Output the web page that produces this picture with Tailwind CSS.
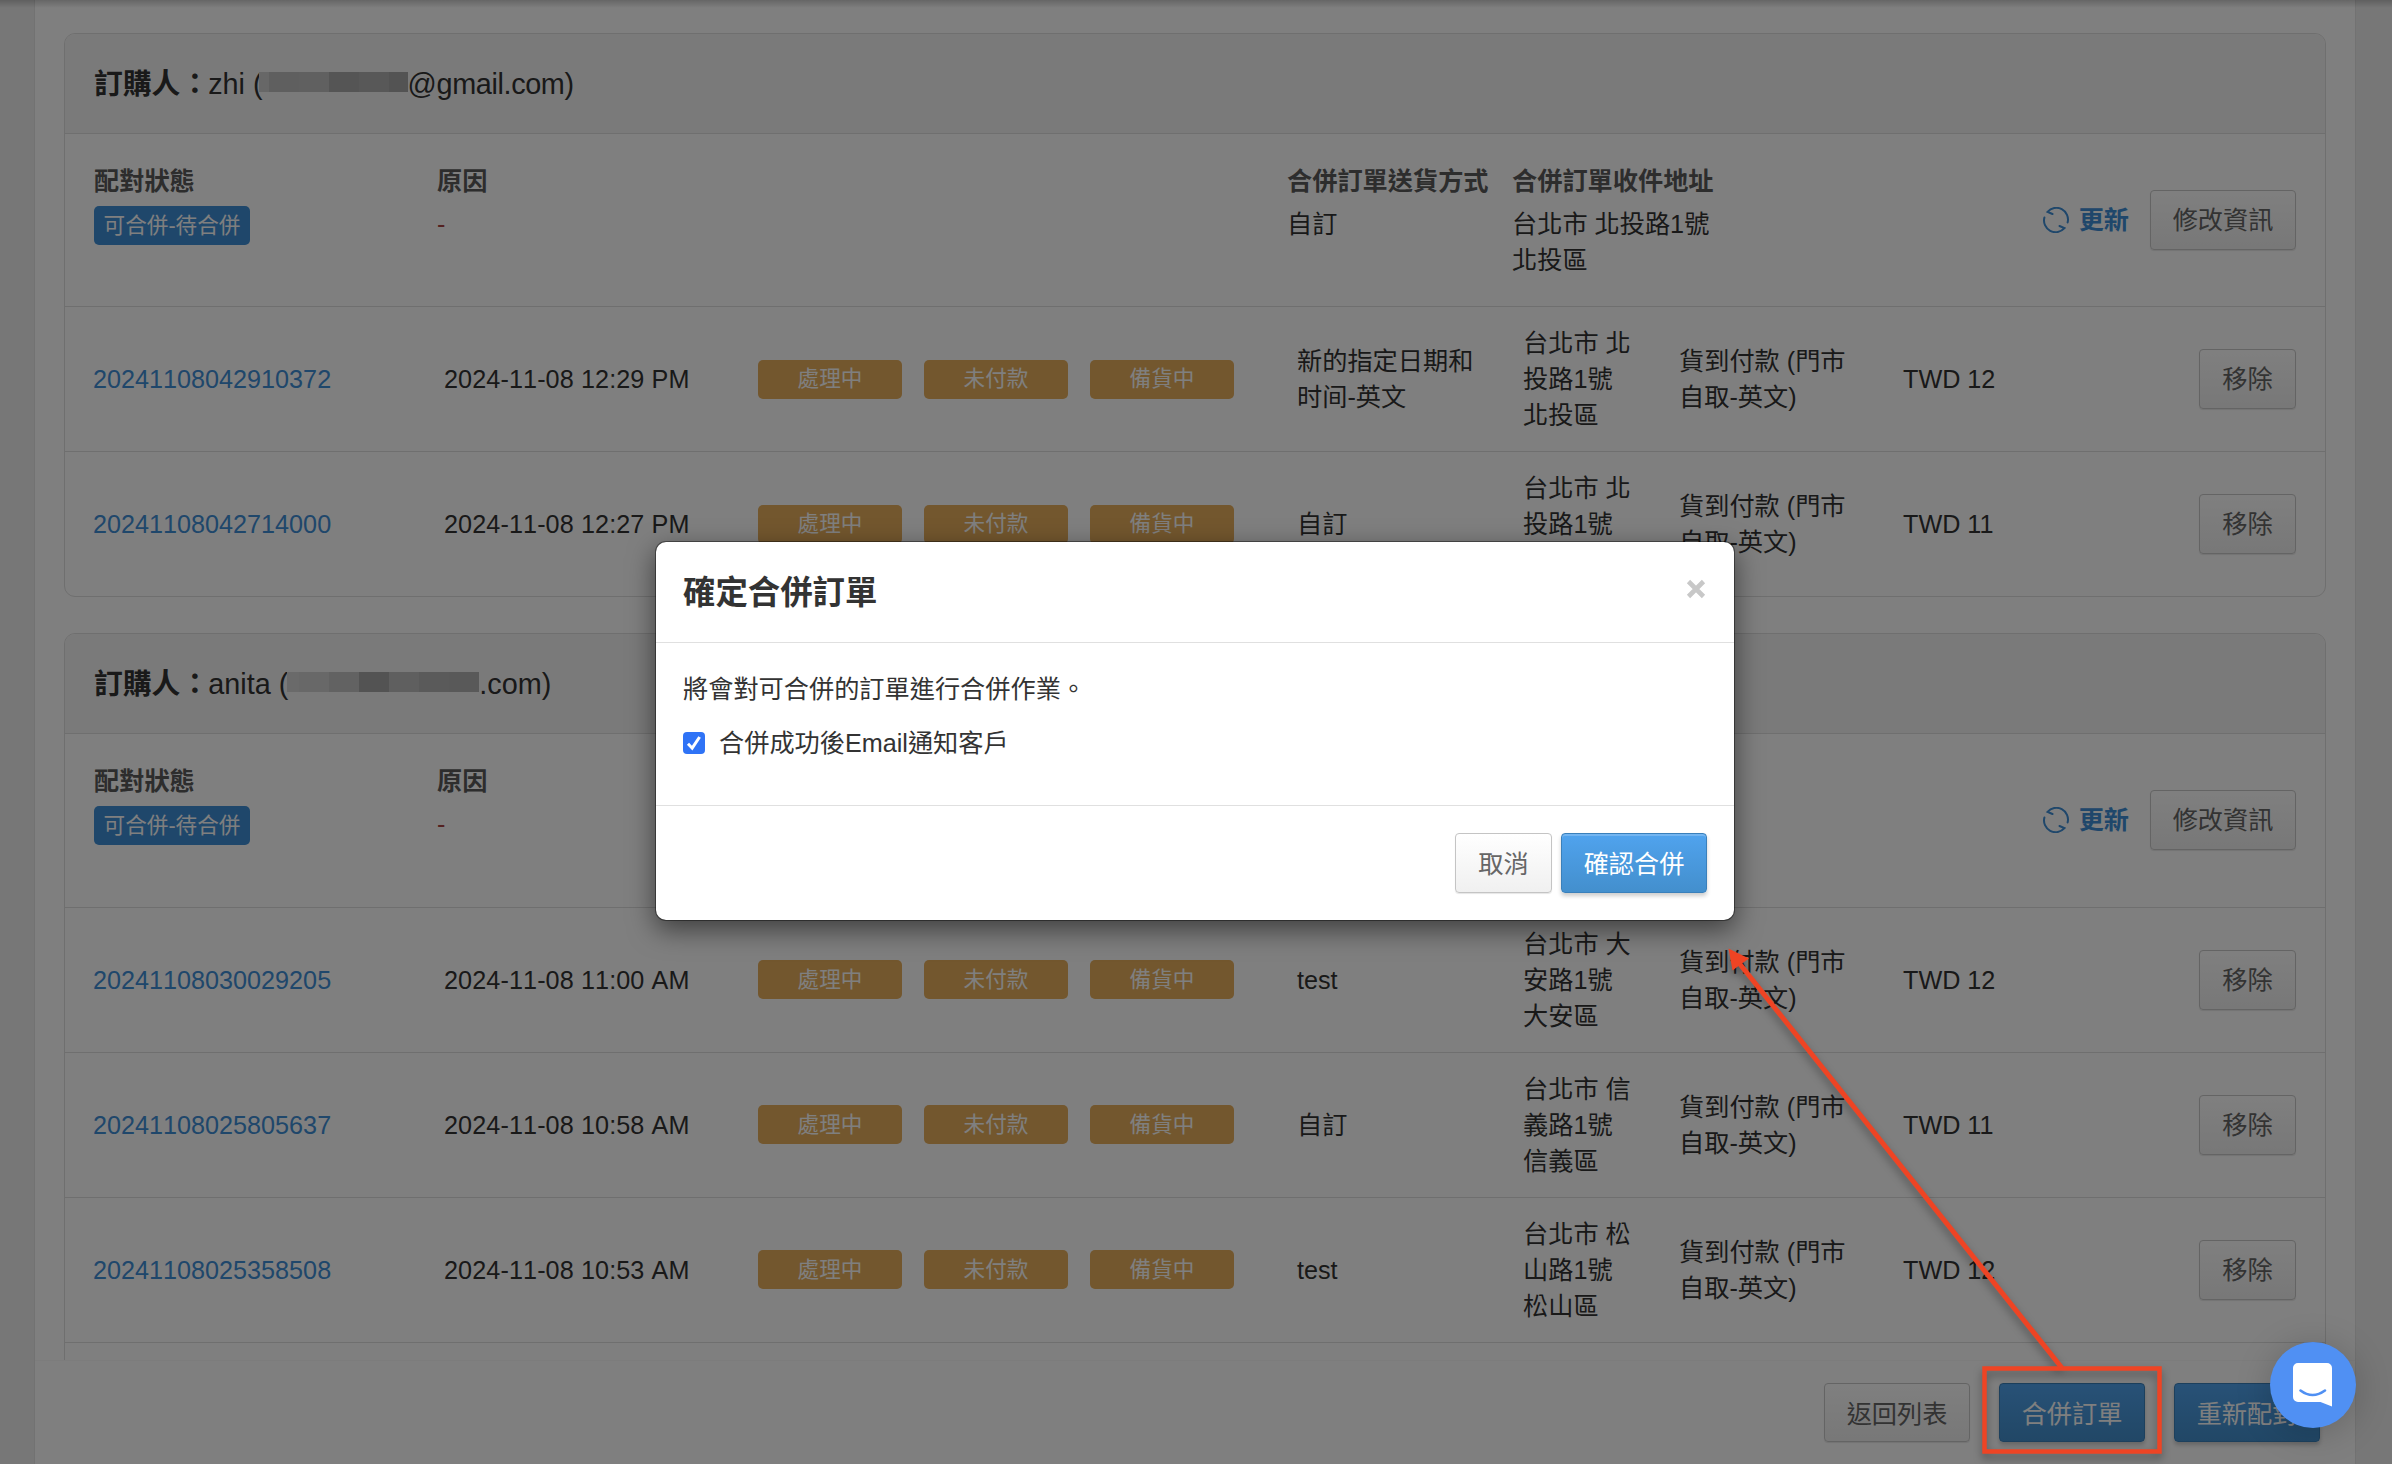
<!DOCTYPE html>
<html lang="zh-Hant">

<head>
    <meta charset="UTF-8">
    <meta name="viewport" content="width=device-width, initial-scale=1.0">
    <title>合併訂單</title>
    <script src="https://cdn.jsdelivr.net/npm/@tailwindcss/browser@4"></script>
</head>

<body class="relative h-[1464px] w-[2392px] overflow-hidden bg-[#efefef] font-['Liberation_Sans','Noto_Sans_CJK_TC',sans-serif] text-[25.2px] leading-9 text-[#333]">
    <main class="ml-[34px] flex h-full w-[2322px] flex-col border-x border-[#e4e4e4] bg-white">
        <div id="groups" class="flex h-[1360px] shrink-0 flex-col gap-9 overflow-hidden px-[29px] pt-[33px]"></div>
        <footer class="flex flex-1 items-start justify-end gap-[29px] border-t border-[#f8f8f8] bg-white pt-[22px] pr-[35px]">
            <button class="h-[59px] w-[146px] rounded-[4px] border border-[#c8c8c8] bg-gradient-to-b from-white to-[#f0f0f0] pt-0.5 text-[#666] shadow-[0_1px_1px_rgba(0,0,0,0.1)]">返回列表</button>
            <button class="h-[59px] w-[146px] rounded-[4px] border border-[#3a80bb] bg-gradient-to-b from-[#50a3ee] to-[#438fcd] pt-0.5 text-white shadow-[0_3px_4px_rgba(0,0,0,0.2)]">合併訂單</button>
            <button class="h-[59px] w-[146px] rounded-[4px] border border-[#3a80bb] bg-gradient-to-b from-[#50a3ee] to-[#438fcd] pt-0.5 text-white shadow-[0_3px_4px_rgba(0,0,0,0.2)]">重新配對</button>
        </footer>
    </main>
    <div class="absolute inset-x-0 top-0 h-2 bg-gradient-to-b from-black/20 to-transparent"></div>

    <!-- Backdrop -->
    <div class="absolute inset-0 bg-black/50"></div>

    <!-- Modal -->
    <div class="absolute top-[541px] left-[655px] flex h-[380px] w-[1080px] flex-col rounded-[11px] border border-black/40 bg-white bg-clip-padding shadow-[0_9px_27px_rgba(0,0,0,0.5)]">
        <div class="flex h-[101px] items-center justify-between border-b border-[#e0e0e0] px-[27px]">
            <h4 class="pt-0.5 text-[32.4px] font-bold">確定合併訂單</h4>
            <svg class="mb-[7px] size-[22px]" viewBox="0 0 22 22" stroke="#c8c8c8" stroke-width="4.6">
                <path d="M3.500 3.500l15 15M18.500 3.500l-15 15" />
            </svg>
        </div>
        <div class="flex h-[163px] flex-col gap-[18px] border-b border-[#e0e0e0] px-[27px] pt-[28px]">
            <p>將會對可合併的訂單進行合併作業。</p>
            <label class="flex items-center">
                <svg class="mr-[14px] size-[22px]" viewBox="0 0 22 22">
                    <rect width="22" height="22" rx="4" fill="#2f73f6" />
                    <path d="M5 11.800l4.200 4.400L16.600 5" fill="none" stroke="#fff" stroke-width="3" />
                </svg>
                合併成功後Email通知客戶
            </label>
        </div>
        <div class="flex justify-end gap-[9px] pt-[27px] pr-[27px]">
            <button class="h-[60px] w-[97px] rounded-[4px] border border-[#c4c4c4] bg-gradient-to-b from-white to-[#f0f0f0] pt-0.5 text-[#666] shadow-[0_1px_1px_rgba(0,0,0,0.1)]">取消</button>
            <button class="h-[60px] w-[146px] rounded-[4px] border border-[#3a80bb] bg-gradient-to-b from-[#50a3ee] to-[#438fcd] pt-0.5 text-white shadow-[0_3px_4px_rgba(0,0,0,0.2),inset_0_2px_0_rgba(255,255,255,0.2)]">確認合併</button>
        </div>
    </div>

    <!-- Chat launcher -->
    <div class="absolute top-[1342px] left-[2270px] size-[86px] rounded-full bg-[#5090f3] shadow-[0_4px_36px_rgba(0,0,0,0.2)]">
        <svg class="size-[86px]" viewBox="0 0 86 86" fill="none">
            <path d="M28 21h29a5 5 0 0 1 5 5v38.500L50.500 60H28a5 5 0 0 1-5-5V26a5 5 0 0 1 5-5z" fill="#fff" />
            <path d="M30.500 48.500q12 9 24.500 0" stroke="#5090f3" stroke-width="2.600" stroke-linecap="round" />
        </svg>
    </div>

    <!-- Highlight box and arrow -->
    <svg class="absolute inset-0 h-[1464px] w-[2392px] drop-shadow-[0_5px_4px_rgba(0,0,0,0.35)]" viewBox="0 0 2392 1464" fill="none" stroke="#ee4424">
        <rect x="1984.500" y="1368.500" width="175" height="83" stroke-width="4.500" />
        <path d="M2062 1368L1739 963" stroke-width="5" />
        <path d="M1728.500 948.500L1749 958.500L1740.500 964.500L1732.500 970.500z" fill="#ee4424" stroke="none" />
    </svg>

    <script>
        const groups = [
            {
                name: 'zhi (', mail: '@gmail.com)', shipping: '自訂', address: '台北市 北投路1號<br>北投區',
                mask: [[10, '#cecece'], [30, '#bebebe'], [30, '#c0c0c0'], [30, '#aaaaaa'], [30, '#b0b0b0'], [19, '#a6a6a6']],
                maskClass: '-ml-[4px]', mailClass: 'tracking-[-0.36px]',
                orders: [
                    ['20241108042910372', '2024-11-08 12:29 PM', '新的指定日期和<br>时间-英文', '台北市 北<br>投路1號<br>北投區', 'TWD 12'],
                    ['20241108042714000', '2024-11-08 12:27 PM', '自訂', '台北市 北<br>投路1號<br>北投區', 'TWD 11'],
                ],
            },
            {
                name: 'anita (', mail: '.com)', shipping: '自訂', address: '台北市 大安路1號<br>大安區',
                mask: [[12, '#d4d4d4'], [30, '#d0d0d0'], [30, '#c4c4c4'], [30, '#a6a6a6'], [30, '#bebebe'], [30, '#b4b4b4'], [30, '#b2b2b2']],
                maskClass: '-ml-px', mailClass: '',
                orders: [
                    ['20241108030029205', '2024-11-08 11:00 AM', 'test', '台北市 大<br>安路1號<br>大安區', 'TWD 12'],
                    ['20241108025805637', '2024-11-08 10:58 AM', '自訂', '台北市 信<br>義路1號<br>信義區', 'TWD 11'],
                    ['20241108025358508', '2024-11-08 10:53 AM', 'test', '台北市 松<br>山路1號<br>松山區', 'TWD 12'],
                ],
                more: true,
            },
        ];

        const badge = text => `<span class="flex h-[39px] w-36 items-center justify-center rounded-[5px] bg-[#e6ae5c] text-[21.6px] text-white">${text}</span>`;

        const orderRow = ([id, date, shipping, address, total]) => `
            <div class="grid h-[145px] grid-cols-[351px_314px_539px_226px_156px_224px_1fr] items-center border-t border-[#dedede] pr-[29px] pl-[28px]">
                <a class="text-[#3e8ed6] [font-kerning:none]">${id}</a>
                <span class="tracking-[0.1px] [font-kerning:none]">${date}</span>
                <div class="flex gap-[22px]">${badge('處理中')}${badge('未付款')}${badge('備貨中')}</div>
                <span>${shipping}</span>
                <span>${address}</span>
                <span>貨到付款 (門市<br>自取-英文)</span>
                <div class="flex items-center justify-between">
                    <span class="whitespace-nowrap">${total}</span>
                    <button class="h-[60px] w-[97px] shrink-0 rounded-[4px] border border-[#c8c8c8] bg-gradient-to-b from-white to-[#f0f0f0] text-[#666] shadow-[0_1px_1px_rgba(0,0,0,0.1)]">移除</button>
                </div>
            </div>`;

        const groupCard = g => `
            <section class="shrink-0 overflow-hidden rounded-[11px] border border-[#dedede]">
                <header class="flex h-[99px] items-center bg-[#f5f5f5] pl-[29px] text-[28.8px]">
                    <b>訂購人：</b><span class="-ml-px whitespace-pre">${g.name}</span>
                    <span class="${g.maskClass} relative mb-1 flex h-5">${g.mask.map(([w, c]) => `<i style="width:${w}px;background:${c}"></i>`).join('')}</span>
                    <span class="${g.mailClass}">${g.mail}</span>
                </header>
                <div class="grid h-[173.4px] grid-cols-[343px_850px_225px_300px_1fr] border-t border-[#dedede] px-[29px] pt-[29px]">
                    <div>
                        <b class="block text-[#5a5a5a]">配對狀態</b>
                        <span class="mt-[7px] flex h-[39px] w-[156px] items-center justify-center rounded-[5px] bg-[#3e8ed6] text-[21.6px] text-white">可合併-待合併</span>
                    </div>
                    <div><b class="block text-[#5a5a5a]">原因</b><span class="mt-[7px] block text-[#a94442]">-</span></div>
                    <div><b class="block text-[#5a5a5a]">合併訂單送貨方式</b><span class="mt-[7px] block">${g.shipping}</span></div>
                    <div><b class="block text-[#5a5a5a]">合併訂單收件地址</b><span class="mt-[7px] block">${g.address}</span></div>
                    <div class="mt-[27px] flex h-[60px] items-center justify-end text-[#3e8ed6]">
                        <svg class="mr-[10px] size-[26px]" viewBox="0 0 26 26" fill="none" stroke="currentColor" stroke-width="2" stroke-linecap="round">
                            <path d="M9.500 7L4.500 4.800A11.700 11.700 0 0 1 24.600 15.500" />
                            <path d="M16.500 19L21.500 21.200A11.700 11.700 0 0 1 1.400 10.500" />
                        </svg>
                        <b>更新</b>
                        <button class="ml-[21px] h-[60px] w-[146px] shrink-0 rounded-[4px] border border-[#c8c8c8] bg-gradient-to-b from-white to-[#f0f0f0] text-[#666] shadow-[0_1px_1px_rgba(0,0,0,0.1)]">修改資訊</button>
                    </div>
                </div>
                ${g.orders.map(orderRow).join('')}
                ${g.more ? '<div class="h-[145px] border-t border-[#dedede]"></div>' : ''}
            </section>`;

        document.getElementById('groups').innerHTML = groups.map(groupCard).join('');
    </script>
</body>

</html>
